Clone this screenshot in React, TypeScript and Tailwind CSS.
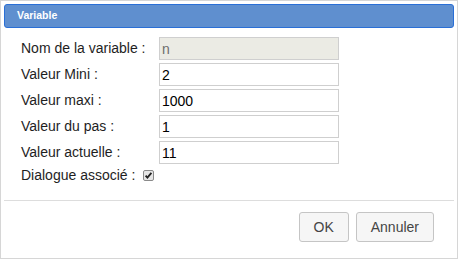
import React from 'react';

const rows = [
  { label: 'Nom de la variable :', value: 'n', readOnly: true },
  { label: 'Valeur Mini :', value: '2' },
  { label: 'Valeur maxi :', value: '1000' },
  { label: 'Valeur du pas :', value: '1' },
  { label: 'Valeur actuelle :', value: '11' },
];

function CheckMark() {
  return (
    <svg width="11" height="11" viewBox="0 0 11 11" className="ml-[8px] shrink-0">
      <rect x="0.5" y="0.5" width="10" height="10" rx="1.5" fill="#e6e6e6" stroke="#8a8a8a" />
      <path d="M2.6 5.6 L4.4 7.6 L8.4 2.8" fill="none" stroke="#222" strokeWidth="1.8" />
    </svg>
  );
}

export default function App() {
  return (
    <div className="w-[458px] h-[260px] bg-white">
      <div className="h-[259px] border border-[#d6d6d6] p-[3px] flex flex-col font-['Liberation_Sans',Arial,sans-serif]">
        {/* title bar */}
        <div className="h-[24px] shrink-0 rounded-[3px] border border-[#2a6fd6] bg-[#5f8fcf] pl-[12px] flex items-center">
          <span className="text-white font-bold text-[10.5px]">Variable</span>
        </div>

        <div className="flex-1 pt-[9px] pl-[17px]">
          <div className="flex flex-col gap-[3px]">
            {rows.map((r) => (
              <div key={r.label} className="flex items-center h-[23px]">
                <label className="w-[138px] text-[14px] text-[#1e1e1e]">{r.label}</label>
                <input
                  readOnly
                  value={r.value}
                  className={
                    r.readOnly
                      ? 'w-[180px] h-[23px] border border-[#cfcfcf] bg-[#ebebe4] px-[2px] text-[14px] text-[#6d6d6d] outline-none'
                      : 'w-[180px] h-[23px] border border-[#cfcfcf] bg-white px-[2px] text-[14px] text-black outline-none'
                  }
                />
              </div>
            ))}
          </div>
          <div className="flex items-center h-[20px] mt-[1px] text-[14px] text-[#1e1e1e]">
            <span>Dialogue associé :</span>
            <CheckMark />
          </div>
        </div>

        <div className="shrink-0 border-t border-[#dddddd] pt-[11px] pb-[13px] pr-[20px] flex justify-end gap-[7px]">
          <button className="h-[30px] px-[14px] rounded-[3px] border border-[#c5c5c5] bg-[#f6f6f6] text-[14px] text-[#454545]">
            OK
          </button>
          <button className="h-[30px] px-[14px] rounded-[3px] border border-[#c5c5c5] bg-[#f6f6f6] text-[14px] text-[#454545]">
            Annuler
          </button>
        </div>
      </div>
    </div>
  );
}
